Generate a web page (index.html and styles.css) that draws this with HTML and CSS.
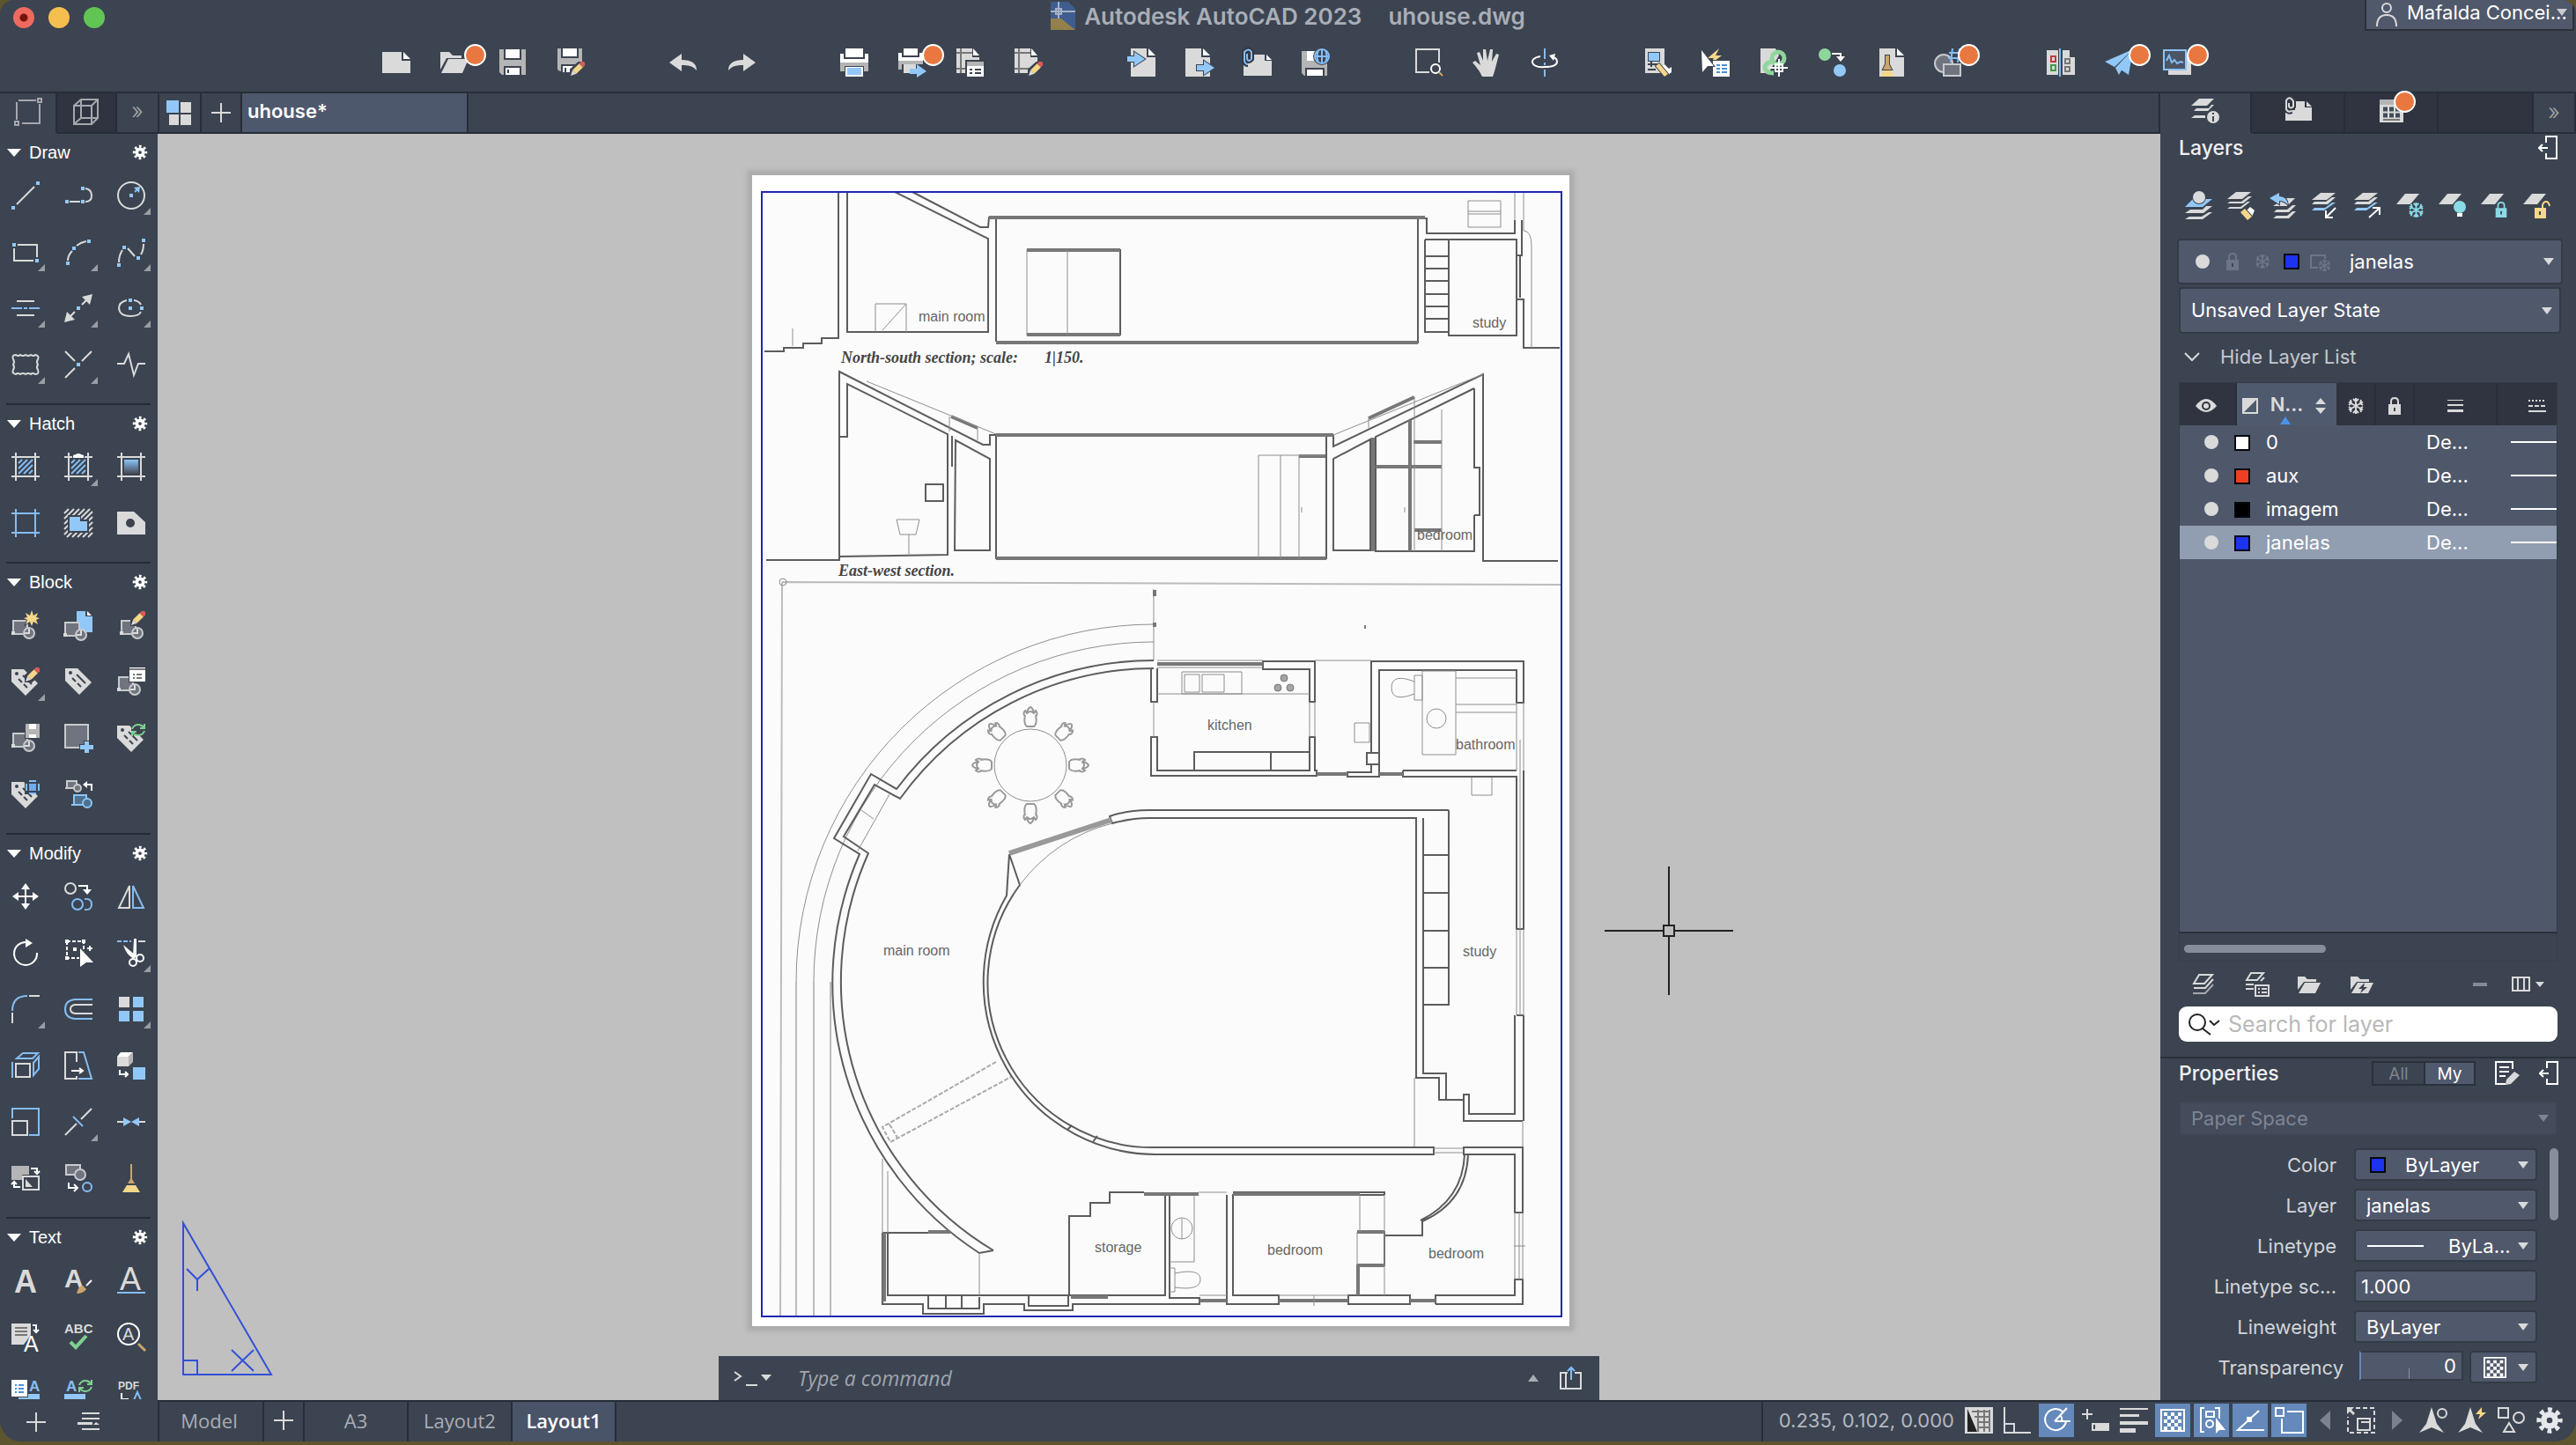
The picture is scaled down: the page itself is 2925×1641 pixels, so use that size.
FILE: index.html
```html
<!DOCTYPE html>
<html lang="en">
  <head>
    <meta charset="UTF-8" />
    <meta name="viewport" content="width=device-width, initial-scale=1.0" />
    <title>Autodesk AutoCAD 2023 - uhouse.dwg</title>
    <link rel="stylesheet" href="styles.css">
  </head>
  <body>
    <svg class="defs" aria-hidden="true">
      <symbol id="gear" viewBox="0 0 24 24">
        <circle cx="12" cy="12" r="5" fill="none" stroke="currentColor" stroke-width="5" />
        <circle cx="12" cy="12" r="9" fill="none" stroke="currentColor" stroke-width="4" stroke-dasharray="3.6 3.47" stroke-dashoffset="1.8" />
      </symbol>
      <symbol id="block" viewBox="0 0 32 32">
        <path class="g" d="M2 11H18V26H2Z" /><path class="f" d="M0 23H4V27H0Z" />
        <circle class="g" cx="20" cy="25" r="6" /><path class="l" d="M20 20V25H15" />
      </symbol>
      <symbol id="tag" viewBox="0 0 32 32">
        <path class="f" d="M0 2H14L30 18L16 32L0 16Z" /><circle class="d" cx="6" cy="7" r="2" />
        <path class="dl" d="M13 9L23 19M8 13L12 17M14 19L18 23" />
      </symbol>
      <symbol id="pencil" viewBox="0 0 16 16">
        <path fill="#3c4451" d="M0 17L0 8L9 0H17V8L8 16Z" />
        <path fill="#d9d9d9" d="M1 15L3 9L7 13Z" /><path fill="#f5d78a" d="M3 9L10 2L14 6L7 13Z" /><path fill="#dc5b56" d="M10 2L12 0H15L16 1V4L14 6Z" />
      </symbol>
      <symbol id="frame" viewBox="0 0 32 32"><path d="M5 0V32M27 0V32M0 5H32M0 27H32" /></symbol>
      <symbol id="flake" viewBox="0 0 20 20">
        <path fill="none" stroke="currentColor" stroke-width="2" d="M10 1V19M2 5.500L18 14.500M18 5.500L2 14.500M7 2L10 5L13 2M7 18L10 15L13 18M2 9L5 7L4 3M18 9L15 7L16 3M2 11L5 13L4 17M18 11L15 13L16 17" />
      </symbol>
      <symbol id="lock" viewBox="0 0 16 20">
        <path fill="none" stroke="currentColor" stroke-width="2" d="M4 9V5Q4 1 8 1T12 5V9" /><path fill="currentColor" d="M1 8H15V20H1Z" /><path class="dl" d="M8 12V16" />
      </symbol>
      <symbol id="page" viewBox="0 0 32 32"><path class="f" d="M2 0H20V10H30V32H2Z" /><path class="wf" d="M22 0L30 8H22Z" /></symbol>
      <symbol id="sheet" viewBox="0 0 26 12"><path d="M10 0H26L16 12H0Z" /></symbol>
      <symbol id="dock" viewBox="0 0 22 28"><path class="wl" d="M9 8V1H21V26H9V20M1 14H11M5 10L1 14L5 18" /></symbol>
      <symbol id="recycle" viewBox="0 0 16 14"><path fill="none" stroke="#7fd18f" stroke-width="2" d="M1 6Q3 1 8 1Q12 1 14 4M15 0V5H10M15 8Q13 13 8 13Q4 13 2 10M1 14V9H6" /></symbol>
      <symbol id="checker" viewBox="0 0 28 26">
        <path class="wl" d="M1 1H27V25H1Z" />
        <path fill="none" stroke="#fff" stroke-width="4" stroke-dasharray="4 4" d="M4 6H24M8 10H24M4 14H24M8 18H24M4 22H24" />
      </symbol>
      <symbol id="chair" viewBox="0 0 24 24"><path d="M6 10Q4 20 8 23H16Q20 20 18 10M6 12Q3 8 6 5L8 8Q12 4 16 8L18 5Q21 8 18 12M8 8Q9 2 12 1Q15 2 16 8" fill="none" stroke="#999" stroke-width="2" /></symbol>
    </svg>

    <div class="window">
      <header class="top">
        <div class="titlebar">
          <div class="lights"><span class="red"></span><span class="yellow"></span><span class="green"></span></div>
          <h1>
            <svg width="28" height="32" viewBox="0 0 28 32"><path fill="#3f5d8f" d="M0 0H20L28 8V32L12 19H0Z" /><path fill="#93804c" d="M0 19H12L28 32H0Z" /><path fill="none" stroke="#a7b2c4" stroke-width="2" d="M0 11H28M9 0V19M6 8H12V14H6Z" /></svg>
            <span>Autodesk AutoCAD 2023</span><span class="doc">uhouse.dwg</span>
          </h1>
          <button class="user" type="button">
            <svg class="l" width="26" height="28" viewBox="0 0 26 28"><circle cx="13" cy="6" r="5" /><path d="M2 27Q2 14 13 14T24 27" /></svg>
            <span>Mafalda Concei...</span>
          </button>
        </div>

        <nav class="toolbar" aria-label="Quick access">
          <div class="group">
            <button aria-label="New"><svg class="i"><path class="f" d="M0 4H22V14H32V28H0Z" /><path class="wf" d="M24 4L32 12H24Z" /></svg></button>
            <button aria-label="Open" class="badge"><svg class="i"><path class="f" d="M0 4H10L14 8H24V11H7L0 24Z" /><path class="f" d="M9 12H32L25 28H1Z" /></svg></button>
            <button aria-label="Save"><svg class="i"><path fill="#b5b5b5" d="M1 1H31V30H4L1 27Z" /><path class="wf" d="M8 1H24V11H8ZM8 22H24V30H8Z" /><path class="dl" d="M7 1V12H25V1M7 30V21H25V30M11 24V28" /></svg></button>
            <button aria-label="Save as"><svg class="i"><path fill="#b5b5b5" d="M1 0H29V26H4L1 24Z" /><path class="wf" d="M7 0H23V9H7ZM7 20H20V27H7Z" /><path class="dl" d="M6 0V10H24V0M6 28V19H22M10 22V27" /><use href="#pencil" x="15" y="15" width="17" height="17" /></svg></button>
          </div>
          <div class="group">
            <button aria-label="Undo"><svg class="i"><path class="f" d="M0 16L14 6V13Q31 13 31 25Q26 18 14 19V26Z" /></svg></button>
            <button aria-label="Redo"><svg class="i"><path class="f" d="M32 16L18 6V13Q1 13 1 25Q6 18 18 19V26Z" /></svg></button>
          </div>
          <div class="group">
            <button aria-label="Plot"><svg class="i"><path class="wf" d="M6 0H26V10H6ZM0 6H4V12H28V6H32V16H0Z" /><path fill="#b5b5b5" d="M0 16H32V26H27V20H5V26H0Z" /><path class="wf" d="M6 21H26V32H6Z" /><path class="bf" d="M8 22H24V30H8Z" /></svg></button>
            <button aria-label="Batch plot" class="badge"><svg class="i"><path class="wf" d="M6 0H22V8H6ZM0 5H4V10H24V5H28V14H0Z" /><path fill="#b5b5b5" d="M0 14H28V18H4V24H0Z" /><path class="f" d="M6 18H20V28H6Z" /><path class="bf" d="M13 23H21V18L32 26L21 33V29H13Z" /></svg></button>
            <button aria-label="Page setup"><svg class="i"><path class="f" d="M0 0H18V10H26V28H0Z" /><path class="wf" d="M19 0L26 8H19Z" /><path class="gl" d="M5 0V28M0 5H18M0 23H12" /><path fill="#3c4451" d="M10 13H32V32H10Z" /><path class="wf" d="M12 15H31V32H12Z" /><path fill="#b5b5b5" d="M12 15H31V20H12Z" /><path class="dl" d="M15 24H18M21 24H28M15 28H18M21 28H28" /></svg></button>
            <button aria-label="Plot styles"><svg class="i"><path class="f" d="M0 0H18V10H26V28H0Z" /><path class="wf" d="M19 0L26 8H19Z" /><path class="gl" d="M5 0V28M0 5H18M0 23H18" /><use href="#pencil" x="15" y="15" width="17" height="17" /></svg></button>
          </div>
          <div class="group">
            <button aria-label="Import"><svg class="i"><use href="#page" x="2" /><path class="bf o" d="M0 9H8V4L20 12L8 20V15H0Z" /></svg></button>
            <button aria-label="Export"><svg class="i"><use href="#page" x="-2" /><path class="bf o" d="M13 19H21V14L33 22L21 30V25H13Z" /></svg></button>
            <button aria-label="Attach"><svg class="i"><path class="f" d="M0 12H12V7H24V14H32V31H0Z" /><path class="wf" d="M26 7L32 13H26Z" /><path class="clip" d="M4 6V12Q6 16 9 12V4Q6 -1 1 4V14Q2 18 5 18" /><path class="bl" d="M4 6V12Q6 16 9 12V4Q6 -1 1 4V14Q2 18 5 18" /></svg></button>
            <button aria-label="Save to web"><svg class="i"><path fill="#b5b5b5" d="M0 3H29V31H3L0 28Z" /><path class="wf" d="M6 3H16V14H6ZM6 24H24V31H6Z" /><path class="dl" d="M5 31V23H25V31" /><circle class="o" fill="#3c4451" cx="23" cy="9" r="9" /><circle class="bl" cx="23" cy="9" r="8" /><path class="bl" d="M15 9H31M23 1V17M19 2Q16 9 19 16M27 2Q30 9 27 16" /></svg></button>
          </div>
          <div class="group">
            <button aria-label="Zoom window"><svg class="i"><path class="l" d="M17 27H2V1H28V16" /><circle class="wl" cx="24" cy="23" r="5" /><path stroke="#cda36c" stroke-width="2" d="M28 27L32 31" /></svg></button>
            <button aria-label="Pan"><svg class="i"><path class="f" d="M11 32Q8 25 0 16L3 14L9 19L5 5L8 4L12 14L12 1H15L17 14L20 1H23L22 15L27 6L30 7L25 26L23 32Z" /></svg></button>
            <button aria-label="Orbit"><svg class="i"><path class="bl" d="M16 0V12M16 16V19M16 24V32" /><path class="wl" d="M11 9Q1 11 2 16Q4 22 16 21Q30 21 30 15Q30 11 25 10" /><path class="wf" d="M21 8L28 6L26 14Z" /></svg></button>
          </div>
          <div class="group">
            <button aria-label="Match properties"><svg class="i"><path class="f" d="M2 0H24V28H2Z" /><path class="bf o" d="M6 5H18V14H6Z" /><path class="dl" d="M5 18H18M5 24H14M9 15V21" /><path class="wf" d="M20 22L24 18L29 23L32 21V27L28 30Z" /><path class="yf o" d="M14 20L18 17L28 29L24 32Z" /></svg></button>
            <button aria-label="Quick select"><svg class="i"><path class="yf" d="M20 0L7 11H14L10 18L23 8H16Z" /><path class="wf o" d="M13 14H32V32H13Z" /><path stroke="#4a90d9" stroke-width="2" stroke-dasharray="4 2 8" d="M17 19H29M17 23H29M17 27H29" /><path class="wf o" d="M0 2L14 20H7L1 27Z" /></svg></button>
            <button aria-label="Geographic location"><svg class="i"><path class="f" d="M1 0H18L22 8L10 28H1Z" /><circle cx="21" cy="11" r="7" fill="none" stroke="#8fd69c" stroke-width="5" /><path fill="none" stroke="#8fd69c" stroke-width="5" d="M13 15Q6 17 6 22Q7 28 16 28" /><path class="wl" d="M22 12V32M12 22H32M18 18H26V26H18Z" /></svg></button>
            <button aria-label="Convert"><svg class="i"><circle fill="#8fd69c" cx="8" cy="7" r="7" /><path class="wl" d="M16 6H26V11" /><path class="wf" d="M21 9H31L26 15Z" /><circle class="bf" cx="25" cy="25" r="7" /></svg></button>
            <button aria-label="Clean"><svg class="i"><use href="#page" x="2" /><path fill="#cda36c" class="o" d="M11 8H15V18L18 24H8L11 18Z" /><path class="yf" d="M8 25H18L20 32H6Z" /></svg></button>
            <button aria-label="Count" class="badge"><svg class="i"><circle class="g" cx="11" cy="17" r="10" /><path class="g" d="M11 18H30V31H11Z" /><path class="bl" d="M21 0L19 16M29 0L27 16M17 5H32M16 11H31" /></svg></button>
          </div>
          <div class="group">
            <button aria-label="Compare"><svg class="i"><path class="f" d="M0 2H13V30H0ZM18 2H26V10H32V30H18Z" /><path class="bl" d="M15 0V32" /><path fill="none" stroke="#c23b3b" stroke-width="2" d="M5 9H10V15H5Z" /><path fill="none" stroke="#3e9b4d" stroke-width="2" d="M5 19H10V25H5Z" /><path class="gl" d="M21 12H26V17H21ZM21 21H26V26H21Z" /></svg></button>
            <button aria-label="Share" class="badge"><svg class="i"><path class="bf" d="M0 15L32 1L11 21ZM12 22L32 1L16 30ZM18 24L32 1L27 30Z" /></svg></button>
            <button aria-label="Performance" class="badge"><svg class="i"><path class="f" d="M6 8H32V30H6Z" /><path fill="#4b5566" stroke="#8cc4f8" stroke-width="2" d="M1 2H26V24H1Z" /><path class="bl" d="M4 14L7 8L10 16L13 13L16 17L20 15L23 16" /></svg></button>
          </div>
        </nav>
      </header>

      <div class="tabs">
        <button class="tab t64 on" aria-label="2D"><svg class="i"><path class="l dim" d="M5 2H25M29 6V28H9M3 24V4" /><path class="l dim" d="M27 0H31V4H27ZM1 26H5V30H1Z" /></svg></button>
        <button class="tab t68 dark" aria-label="3D"><svg class="i"><path class="l dim" d="M2 8L10 1H29V22L22 29H2ZM2 8H22V29M22 8L29 1M10 1V22H29M10 22L2 29" /></svg></button>
        <button class="tab t48 more">»</button>
        <button class="tab t48" aria-label="Start"><svg class="i"><path class="bf" d="M1 2H15V16H1Z" /><path class="f" d="M17 4H29V16H17ZM4 18H15V30H4ZM17 18H29V30H17Z" /></svg></button>
        <button class="tab t46" aria-label="New drawing"><svg class="i"><path class="l" d="M16 5V27M5 16H27" /></svg></button>
        <button class="tab file">uhouse*</button>
        <div class="tabs-rest"></div>
        <div class="side-tabs">
          <button class="tab t104 on" aria-label="Layers"><svg class="i"><path class="f" d="M9 1H26L18 9H0ZM6 12H20L23 8H26L19 15H3ZM4 20H16V23H0Z" /><circle class="f o" cx="25" cy="22" r="7" /><path class="dl" d="M25 17V19M25 21V27" /></svg></button>
          <button class="tab t106 dark" aria-label="References"><svg class="i"><path class="f" d="M2 14H13V4H24V11H32V26H2Z" /><path class="f" d="M26 4L32 10H26Z" /><path class="clip" d="M6 6V10Q8 13 11 10V4Q7 -3 3 3V13Q5 17 9 15" /><path class="l" d="M6 6V10Q8 13 11 10V4Q7 -3 3 3V13Q5 17 9 15" /></svg></button>
          <button class="tab t106 dark badge" aria-label="Content"><svg class="i"><path class="f" d="M3 2H30V28H3Z" /><path fill="#b5b5b5" d="M3 2H30V8H3Z" /><path class="gl" d="M7 25H26" /><path stroke="#454b58" stroke-width="5" stroke-dasharray="5 2" d="M7 13H26M7 20H26" /></svg></button>
          <span class="tab rest dark"></span>
          <button class="tab t48 more">»</button>
        </div>
      </div>

      <div class="work">
        <aside class="palette">
          <div class="sections">
            <section>
              <h2>Draw <svg class="gear"><use href="#gear" /></svg></h2>
              <div class="tools">
                <button aria-label="Line"><svg class="i"><path class="l" d="M6 26L26 6" /><path class="bf" d="M0 28H4V32H0ZM28 0H32V4H28Z" /></svg></button>
                <button aria-label="Polyline"><svg class="i"><path class="l" d="M6 23H18M24 8Q31 9 31 16T24 23" /><path class="bf" d="M1 21H5V25H1ZM19 21H23V25H19ZM19 6H23V10H19Z" /></svg></button>
                <button aria-label="Circle" class="fly"><svg class="i"><circle class="l" cx="16" cy="16" r="15" /><path class="bl" d="M20 12L24 8" /><path class="bf" d="M14 14H18V18H14ZM19 7L26 6L25 13Z" /></svg></button>
                <button aria-label="Rectangle" class="fly"><svg class="i"><path class="l" d="M7 8H29V22M25 26H3V12" /><path class="bf" d="M1 6H5V10H1ZM27 24H31V28H27Z" /></svg></button>
                <button aria-label="Arc" class="fly"><svg class="i"><path class="l" d="M4 26Q4 20 9 15M14 9Q19 5 25 4" /><path class="bf" d="M26 2H30V6H26ZM9 10H13V14H9ZM2 27H6V31H2Z" /></svg></button>
                <button aria-label="Spline" class="fly"><svg class="i"><path class="l" d="M2 28Q2 20 6 14M12 12L20 21M27 19Q30 14 30 7" /><path class="bf" d="M28 1H32V5H28ZM6 9H10V13H6ZM22 21H26V25H22ZM0 29H4V33H0Z" /></svg></button>
                <button aria-label="Construction line" class="fly"><svg class="i"><path class="l" d="M6 8H26M6 24H26" /><path class="bl" d="M0 16H12M14 16H18M20 16H32" /></svg></button>
                <button aria-label="Ray" class="fly"><svg class="i"><path class="l" d="M12 20L5 27M20 12L27 5" /><path class="f" d="M32 0L29 12L20 3ZM0 32L3 20L12 29Z" /><path class="bf" d="M14 14H18V18H14Z" /></svg></button>
                <button aria-label="Ellipse" class="fly"><svg class="i"><path class="l" d="M11 7Q2 9 2 16Q3 25 15 25Q25 25 27 20M19 7Q25 8 27 12" /><path class="bf" d="M13 5H17V9H13ZM13 14H17V18H13ZM26 14H30V18H26Z" /></svg></button>
                <button aria-label="Revision cloud" class="fly"><svg class="i"><path class="l" d="M5 5Q8 7 10 5Q13 7 16 5Q19 7 22 5Q25 7 27 5Q32 6 30 10Q28 13 30 16Q28 19 30 22Q32 27 27 27Q24 25 22 27Q19 25 16 27Q13 25 10 27Q7 25 5 27Q0 26 2 22Q4 19 2 16Q4 13 2 10Q0 5 5 5Z" /></svg></button>
                <button aria-label="Point" class="fly"><svg class="i"><path class="l" d="M1 1L12 12M31 1L20 12M1 31L12 20" /><path class="bf" d="M14 14H18V18H14Z" /></svg></button>
                <button aria-label="Break line"><svg class="i"><path class="l" d="M0 15H8L13 4L19 28L24 15H32" /></svg></button>
              </div>
            </section>
            <section>
              <h2>Hatch <svg class="gear"><use href="#gear" /></svg></h2>
              <div class="tools">
                <button aria-label="Hatch"><svg class="i"><use href="#frame" class="l" /><path class="bl" d="M8 12L12 8M8 18L18 8M8 24L24 8M14 24L24 14M20 24L24 20" /></svg></button>
                <button aria-label="Hatch edit" class="fly"><svg class="i"><use href="#frame" class="l" /><path class="bl" d="M8 12L12 8M8 18L18 8M8 24L24 8M14 24L24 14M20 24L24 20" /><path class="wf o" d="M10 6V3L13 2Q16 0 19 2L22 3V6Z" /></svg></button>
                <button aria-label="Gradient"><svg class="i"><defs><linearGradient id="grad" x2="0" y2="1"><stop stop-color="#8cc4f8" /><stop offset="1" stop-color="#454b57" /></linearGradient></defs><use href="#frame" class="l" /><path fill="url(#grad)" d="M8 8H24V24H8Z" /></svg></button>
                <button aria-label="Boundary"><svg class="i"><use href="#frame" class="bl" /></svg></button>
                <button aria-label="Region"><svg class="i"><path class="l" d="M0 5L5 0M0 11L11 0M0 17L17 0M0 23L23 0M0 29L29 0M3 32L32 3M9 32L32 9M15 32L32 15M21 32L32 21M27 32L32 27" /><path class="d" d="M4 7H19V12H28V27H4Z" /><path class="bf" d="M6 9H18V14H26V25H6Z" /></svg></button>
                <button aria-label="Wipeout"><svg class="i"><path class="f" d="M0 3H19L32 15V29H0Z" /><circle class="d" cx="15" cy="16" r="5" /></svg></button>
              </div>
            </section>
            <section>
              <h2>Block <svg class="gear"><use href="#gear" /></svg></h2>
              <div class="tools">
                <button aria-label="Create block"><svg class="i"><use href="#block" /><path class="yf o" d="M23 -1L25 5L30 2L28 7L32 8L28 10L30 15L25 12L23 17L21 12L16 15L18 10L14 8L18 7L16 2L21 5Z" /></svg></button>
                <button aria-label="Insert block"><svg class="i"><path class="bf" d="M14 0H24V6H32V24H14Z" /><path class="wf" d="M26 0L31 5H26Z" /><use href="#block" y="2" x="-1" /></svg></button>
                <button aria-label="Edit block"><svg class="i"><use href="#block" x="3" y="0" /><use href="#pencil" x="15" y="0" width="17" height="17" /></svg></button>
                <button aria-label="Edit attribute" class="fly"><svg class="i"><use href="#tag" /><use href="#pencil" x="15" y="0" width="17" height="17" /></svg></button>
                <button aria-label="Define attribute"><svg class="i"><use href="#tag" x="1" y="-1" /></svg></button>
                <button aria-label="Manage attributes"><svg class="i"><use href="#block" y="0" /><path class="wf o" d="M14 0H32V16H14Z" /><path class="gl" d="M14 2H32M18 8H20M22 8H28M18 12H20M22 12H28" /></svg></button>
                <button aria-label="Write block"><svg class="i"><use href="#block" /><path fill="#b5b5b5" class="o" d="M16 0H32V16H16Z" /><path class="wf" d="M20 0H28V6H20ZM20 12H28V16H20Z" /></svg></button>
                <button aria-label="Set base point"><svg class="i"><path class="g" d="M1 1H27V27H1Z" /><path class="bf o" d="M23 20H28V24H33V29H28V33H23V29H18V24H23Z" /></svg></button>
                <button aria-label="Sync attributes"><svg class="i"><use href="#tag" /><path fill="#3c4451" d="M16 0H32V13H16Z" /><use href="#recycle" x="16" y="0" width="16" height="14" /></svg></button>
                <button aria-label="Retain attributes"><svg class="i"><use href="#tag" /><path fill="#3c4451" d="M15 0H32V16H15Z" /><path fill="#6aaeea" d="M20 4H28V12H20Z" /><path class="bl" d="M17 4V12M31 4V12M20 1H28M20 15H28" /></svg></button>
                <button aria-label="Replace block"><svg class="i"><path class="g" d="M3 1H14V9H3ZM1 9H5" /><circle class="g" cx="15" cy="9" r="4" /><path class="wl" d="M31 12V5H25" /><path class="wf" d="M26 1V9L21 5Z" /><path fill="#4f708f" stroke="#8cc4f8" stroke-width="2" d="M11 17H25V28H11ZM8 28H13" /><circle fill="#4f708f" stroke="#8cc4f8" stroke-width="2" cx="26" cy="26" r="5" /></svg></button>
              </div>
            </section>
            <section>
              <h2>Modify <svg class="gear"><use href="#gear" /></svg></h2>
              <div class="tools">
                <button aria-label="Move"><svg class="i"><path class="wl" d="M16 4V28M4 16H28" /><path class="wf" d="M16 1L21 8H11ZM16 31L21 24H11ZM1 16L8 11V21ZM31 16L24 11V21Z" /></svg></button>
                <button aria-label="Copy"><svg class="i"><circle class="l" cx="7" cy="7" r="6" /><path class="wl" d="M16 4H26V9" /><path class="wf" d="M21 8H31L26 14Z" /><circle class="bl" cx="15" cy="25" r="6" /><path class="bl" d="M23 19Q31 18 31 25T23 31" /></svg></button>
                <button aria-label="Mirror"><svg class="i"><path class="l" d="M14 4V29H2Z" /><path class="bl" d="M18 4V29H30Z" /></svg></button>
                <button aria-label="Rotate"><svg class="i"><path class="wl" d="M17 4A13 13 0 1 0 29 16" /><path class="wf" d="M16 0L24 5L16 10Z" /></svg></button>
                <button aria-label="Stretch"><svg class="i"><path class="wl" d="M3 3H22V22H3Z" stroke-dasharray="4 2" /><path class="wf" d="M1 1H5V5H1ZM20 1H24V5H20ZM1 20H5V24H1ZM10 10H14V14H10ZM26 10H32V12H26ZM28 8H30V14H28Z" /><path class="wf o" d="M18 11L33 27H25L18 32Z" /></svg></button>
                <button aria-label="Trim" class="fly"><svg class="i"><path class="bl" d="M0 3H16" stroke-dasharray="5 2" /><path class="l" d="M24 3H32" /><path class="wf" d="M19 0H22V20H18ZM7 7L22 20L19 23Q10 18 7 7Z" /><circle class="wl" cx="18" cy="27" r="4" /><circle class="wl" cx="26" cy="22" r="4" /></svg></button>
                <button aria-label="Fillet" class="fly"><svg class="i"><path class="bl" d="M1 18Q1 1 18 1" /><path class="l" d="M20 1H32M1 20V32" /></svg></button>
                <button aria-label="Offset"><svg class="i"><path class="bl" d="M32 5H12Q1 6 1 16T12 27H32" /><path class="l" d="M32 11H12Q7 12 7 16T12 21H32" /></svg></button>
                <button aria-label="Array" class="fly"><svg class="i"><path class="f" d="M2 2H14V14H2Z" /><path class="bf" d="M18 2H30V14H18ZM2 18H14V30H2ZM18 18H30V30H18Z" /></svg></button>
                <button aria-label="Explode"><svg class="i"><path class="l" d="M5 14H21V29H5Z" /><path class="bl" d="M1 12V30M6 8L13 2H30L24 8ZM25 13L31 6V20L25 27Z" /></svg></button>
                <button aria-label="Lengthen"><svg class="i"><path class="l" d="M14 12V1H1V31H14V28" /><path class="bl" d="M16 1H22L31 31H16" /><path class="wl" d="M8 22H19M17 19L21 22L17 25" /></svg></button>
                <button aria-label="Flatten"><svg class="i"><path class="f" d="M0 6H13V17H0Z" /><path fill="#fff" d="M0 6L4 1H18L13 6Z" /><path fill="#b5b5b5" d="M13 6L18 1V12L13 17Z" /><path class="bf" d="M18 18H32V32H18Z" /><path class="wl" d="M3 21V26H11M9 23L12 26L9 29" /></svg></button>
                <button aria-label="Scale"><svg class="i"><path class="l" d="M1 15H18V31H1Z" /><path class="bl" d="M1 12V1H31V31H20" /></svg></button>
                <button aria-label="Break" class="fly"><svg class="i"><path class="l" d="M1 31L14 18M19 13L31 1" /><path class="bl" d="M10 10L21 21" /></svg></button>
                <button aria-label="Join"><svg class="i"><path class="l" d="M0 16H8M24 16H32" /><path class="bf" d="M7 11L16 16L7 21ZM25 11L16 16L25 21Z" /></svg></button>
                <button aria-label="Change space"><svg class="i"><path fill="#b5b5b5" d="M0 2H20V12H12V18H0Z" /><path class="l" d="M13 14H31V29H13Z" /><path class="f" d="M16 17L24 26H16Z" /><path class="wl" d="M22 5H29V9M26 8L29 11L32 8M3 21V26H10M0 23L3 20L6 23" /></svg></button>
                <button aria-label="Copy nested"><svg class="i"><path class="g" d="M2 1H18V12H2Z" /><circle class="g" cx="18" cy="12" r="6" /><path class="wl" d="M5 21V27H13M11 23L15 27L11 31" /><circle class="bl" cx="26" cy="26" r="5" /></svg></button>
                <button aria-label="Purge"><svg class="i"><path fill="#cda36c" d="M15 0H17V17L20 22H12L15 17Z" /><path class="yf" d="M11 24H21L26 32H6Z" /></svg></button>
              </div>
            </section>
            <section>
              <h2>Text <svg class="gear"><use href="#gear" /></svg></h2>
              <div class="tools">
                <button aria-label="Multiline text"><svg class="i"><text class="ft bold" x="3" y="30" font-size="36">A</text></svg></button>
                <button aria-label="Text style"><svg class="i"><text class="ft bold" x="0" y="24" font-size="30">A</text><path class="wl" d="M25 22L31 16" /><path fill="#cda36c" d="M14 31Q16 22 21 22L25 26Q22 31 14 31Z" /></svg></button>
                <button aria-label="Single line text"><svg class="i"><text class="ft" x="3" y="27" font-size="36">A</text><path class="bl" d="M0 30H32" /></svg></button>
                <button aria-label="Convert to text"><svg class="i"><path class="f" d="M0 1H22V14L14 25H0Z" /><path class="gl" d="M4 6H18M4 10H18M4 14H18" /><path class="wl" d="M24 3H28V9M25 8L28 11L31 8" /><text class="ft white" x="14" y="33" font-size="25">A</text></svg></button>
                <button aria-label="Spell check"><svg class="i"><text class="ft bold" x="0" y="12" font-size="15">ABC</text><path fill="none" stroke="#7fd18f" stroke-width="4" d="M7 22L13 28L25 15" /></svg></button>
                <button aria-label="Find text"><svg class="i"><circle class="wl" cx="13" cy="13" r="12" /><text class="ft" x="6" y="20" font-size="20">A</text><path stroke="#cda36c" stroke-width="3" d="M24 24L32 32" /></svg></button>
                <button aria-label="Field"><svg class="i"><path class="bf" d="M8 17H32V24H8Z" /><path class="wf o" d="M0 1H18V20H0Z" /><path stroke="#4a90d9" stroke-width="2" stroke-dasharray="2 2 8" d="M4 7H14M4 11H14M4 15H14" /><text class="ft blue bold" x="20" y="14" font-size="17">A</text></svg></button>
                <button aria-label="Update field"><svg class="i"><path class="bf" d="M0 17H24V24H0Z" /><text class="ft blue bold" x="2" y="14" font-size="17">A</text><use href="#recycle" x="16" y="1" width="16" height="14" /></svg></button>
                <button aria-label="PDF text"><svg class="i"><text class="ft bold" x="1" y="12" font-size="12">PDF</text><path class="wl" d="M5 16V23H13" /><path class="bl" d="M19 24L23 15L27 24" /></svg></button>
              </div>
            </section>
          </div>
          <div class="palette-foot">
            <button aria-label="Add set"><svg class="i"><path class="l" d="M16 5V27M5 16H27" /></svg></button>
            <button aria-label="Customize"><svg class="i"><path class="l" d="M8 6H28M8 12H28M8 24H28" /><path class="f" d="M3 16H20V19H3ZM21 19L24 16L28 19Z" /></svg></button>
          </div>
        </aside>

        <div class="main">
          <div class="stage">
            <main class="canvas">
              <!-- sheet, drawn in window coordinates -->
              <svg class="paper" width="928" height="1307" viewBox="854 199 928 1307">
                <rect x="854" y="199" width="928" height="1307" fill="#fff" />
                <rect x="865" y="218" width="908" height="1277" fill="#fbfbfb" />
                <!-- north-south section -->
                <g class="ink">
                  <path d="M868 399H890V395H912V390H933V384H952V218M962 218V377H1122V271L1016 218M1036 218L1113 258H1122L1123 247H1131" />
                  <path d="M1131 248V388M1610 390V248H1620V265H1720V250M1618 272H1722V381H1645V272M1618 272V377H1645" />
                  <path d="M1618 291H1645M1618 305H1645M1618 319H1645M1618 334H1645M1618 348H1645M1618 362H1645" />
                  <path d="M1272 283V381M1728 250V290H1722M1726 290V338M1722 340H1730V395H1771" />
                </g>
                <path class="mid" d="M1123 247H1618M1131 389H1610M1166 284H1272M1166 380H1272" />
                <path class="thin" d="M1166 283V381M1212 284V380M1720 218V250M1730 218V262Q1739 262 1739 280V395M994 377V345H1029V377M1002 375L1029 345M900 373V393M1667 228H1704V258H1667ZM1667 240H1704M1667 243H1704" />
                <!-- east-west section -->
                <g class="ink">
                  <path d="M870 636H953V422L1116 505H1124V494H1131M953 496H962V436L1076 493V630L953 632M1085 500L1124 521V625H1084ZM1081 495V530" />
                  <path d="M1131 494V634H1506V494M1514 494V507L1684 425V637H1769M1514 521V625H1556V499ZM1674 441L1562 496V626H1674V585M1674 441V531H1680V585H1674" />
                  <path d="M1051 550H1071V569H1051Z" />
                </g>
                <path class="mid" d="M1131 494H1514M1131 634H1506M1559 497V626M1601 477V626M1605 502H1637M1562 530H1637M1475 518H1505M1080 473L1110 486M1554 475L1606 451M1606 602H1637" />
                <path class="thin" d="M984 433L1131 493M1078 473V490M1110 484V500M1514 494L1684 425M1554 475V486M1606 451V626M1637 465V626M1429 634V517H1505M1454 517V634M1475 517V634M1018 590H1044L1040 607H1022ZM1032 607V631M1478 576V582M1595 576V582" />
                <!-- site lines -->
                <path class="faint" d="M886 1495L888 668V661M904 1115V1495M924 1115V1495M943 1115V1495M888 661L1772 664" />
                <circle class="thin" cx="889" cy="661" r="4" />
                <path class="thin" d="M1310 669V750M1310 709A406 406 0 0 0 904 1115M1310 729A386 386 0 0 0 924 1115" />
                <path fill="#777" d="M1309 670H1313V677H1309ZM1309 707H1313V712H1309ZM1549 710H1551V714H1549Z" />
                <!-- outer curved wall -->
                <g class="ink">
                  <path d="M1310 750A365 365 0 0 0 1018 896L989 879L947 952L976 970A365 365 0 0 0 1112 1423L1128 1420" />
                  <path d="M1310 759A356 356 0 0 0 1022 907L993 891L958 950L986 969A356 356 0 0 0 1128 1420" />
                </g>
                <path class="thin" d="M1010 902L974 966M978 920L992 930" />
                <!-- courtyard -->
                <g class="ink">
                  <path d="M1645 920H1305Q1280 920 1260 927L1263 935Q1285 929 1305 929H1608V1224H1634V1249H1662V1273H1729" />
                  <path d="M1146 970L1143 1017A196 196 0 0 0 1312 1311H1628V1303H1312A187 187 0 0 1 1158 1005L1146 970" />
                  <path d="M1616 929V1219H1642V1249M1662 1249V1243H1668V1265H1720V1153M1645 920V1141H1616M1616 971H1645M1616 1014H1645M1616 1057H1645M1616 1099H1645" />
                  <path d="M1212 1283L1217 1278M1241 1297L1246 1290" />
                </g>
                <path class="band" d="M1146 969L1262 931" />
                <path class="thin" d="M1263 935A187 187 0 0 0 1158 1005M1606 1224V1302M1729 1274V1302M1628 1304H1662M1628 1309H1662" />
                <path class="dash" d="M1131 1206L1002 1280L1011 1297L1148 1223M1010 1277L1019 1292" />
                <!-- dining table -->
                <circle class="thin" cx="1170" cy="869" r="41" />
                <g>
                  <use href="#chair" x="1158" y="802" width="24" height="24" />
                  <use href="#chair" x="1158" y="802" width="24" height="24" transform="rotate(45 1170 869)" />
                  <use href="#chair" x="1158" y="802" width="24" height="24" transform="rotate(90 1170 869)" />
                  <use href="#chair" x="1158" y="802" width="24" height="24" transform="rotate(135 1170 869)" />
                  <use href="#chair" x="1158" y="802" width="24" height="24" transform="rotate(180 1170 869)" />
                  <use href="#chair" x="1158" y="802" width="24" height="24" transform="rotate(225 1170 869)" />
                  <use href="#chair" x="1158" y="802" width="24" height="24" transform="rotate(270 1170 869)" />
                  <use href="#chair" x="1158" y="802" width="24" height="24" transform="rotate(315 1170 869)" />
                </g>
                <!-- kitchen and bathroom -->
                <g class="ink">
                  <path d="M1307 759V797H1314V759M1307 837H1314V875H1487V837H1493V875H1495V881H1307ZM1434 751H1493V797H1487V760H1434Z" />
                  <path d="M1356 875V854H1487M1443 854V875" />
                  <path d="M1557 855V751H1730V798H1722V761H1566V855ZM1552 855H1566V868H1552ZM1557 868V877H1530V882H1566V868" />
                  <path d="M1593 875H1722M1593 875V882H1722V1055H1730V875M1730 1153V1273M1722 1153H1730" />
                </g>
                <path class="mid" d="M1314 754H1434M1566 879H1593M1495 879H1530" />
                <path class="thin" d="M1310 797V837M1487 797V837M1493 797V837M1314 788H1487M1342 763H1410V788H1342ZM1345 766H1362V786H1345ZM1365 766H1390V786H1365ZM1493 750H1557M1314 750H1434M1314 758H1434M1722 798V875M1730 798V875M1726 840V1153M1722 1055V1153M1730 1055V1153M1615 762H1653V857H1615ZM1653 770H1722M1653 800H1722M1653 809H1722M1606 767H1615V795H1606ZM1606 788Q1580 798 1580 781T1606 774M1538 821H1555V843H1538ZM1671 883V903H1694V883" />
                <circle class="thin" cx="1631" cy="816" r="11" />
                <g fill="#a5a5a5" stroke="#777"><circle cx="1458" cy="770" r="4" /><circle cx="1451" cy="781" r="4" /><circle cx="1465" cy="781" r="4" /></g>
                <!-- bottom rooms -->
                <g class="ink">
                  <path d="M1002 1400V1481H1048V1492H1117V1481H1163V1488H1218V1481H1362V1474H1328V1357M1002 1400H1054M1008 1400V1471H1214V1381H1238V1366H1260V1354H1299" />
                  <path d="M1214 1471H1323V1357M1168 1471V1483H1213V1471M1054 1471V1486H1112V1473M1074 1471V1486M1092 1471V1486" />
                  <path d="M1393 1357V1481H1452V1471H1400V1357H1572M1400 1354H1572V1357M1544 1399H1572V1437H1541V1471M1531 1471H1601V1481H1531ZM1630 1481V1471H1720V1453H1729V1481H1630" />
                  <path d="M1662 1303H1729V1377H1720V1311H1662ZM1667 1311Q1665 1365 1615 1387V1403H1573M1663 1311Q1661 1362 1613 1386" />
                </g>
                <path class="mid" d="M1299 1356H1361M1400 1356H1544M1216 1473H1258M1362 1477H1393M1452 1477H1531M1601 1477H1630M1541 1437H1572M1541 1399H1572M1054 1399H1079M1542 1437V1471M1004 1400V1478" />
                <path class="thin" d="M1002 1316V1400M1008 1330V1400M1112 1423V1471M1361 1354H1393M1356 1357V1433H1328M1544 1357V1399M1541 1399V1437M1572 1357V1471M1720 1377V1453M1729 1377V1453M1725 1377V1453M1719 1415H1732M1328 1440H1334V1467H1328M1334 1446Q1363 1440 1363 1453T1334 1462M1492 1471V1483M1362 1471H1393M1452 1471H1531M1342 1384V1407" />
                <circle class="thin" cx="1342" cy="1395" r="12" />
                <g class="room">
                  <text x="1043" y="365">main room</text>
                  <text x="1672" y="372">study</text>
                  <text x="1609" y="613">bedroom</text>
                  <text x="1371" y="829">kitchen</text>
                  <text x="1653" y="851">bathroom</text>
                  <text x="1003" y="1085">main room</text>
                  <text x="1661" y="1086">study</text>
                  <text x="1243" y="1422">storage</text>
                  <text x="1439" y="1425">bedroom</text>
                  <text x="1622" y="1429">bedroom</text>
                </g>
                <g class="caption">
                  <text x="955" y="412">North-south section; scale:</text>
                  <text x="1186" y="412">1|150.</text>
                  <text x="952" y="654">East-west section.</text>
                </g>
                <rect x="865" y="218" width="908" height="1277" fill="none" stroke="#2226b4" stroke-width="2" />
              </svg>

              <svg class="ucs" width="104" height="176" viewBox="206 1387 104 176">
                <path d="M208 1389V1561H308ZM208 1545H224V1561M212 1441L224 1453L237 1441M224 1453V1466M263 1533L288 1557M288 1533L263 1557" />
              </svg>
              <svg class="cursor" width="146" height="146" viewBox="0 0 146 146">
                <path d="M73 0V67M73 79V146M0 73H67M79 73H146M67 67H79V79H67Z" />
              </svg>

              <form class="command">
                <svg class="prompt" width="46" height="24" viewBox="0 0 46 24"><path class="l" d="M2 5L9 10L2 15M15 20H28" /><path class="f" d="M32 8H44L38 15Z" /></svg>
                <input type="text" aria-label="Command" placeholder="Type a command" />
                <svg width="14" height="10" viewBox="0 0 14 10"><path fill="#a9adb5" d="M1 9H13L7 1Z" /></svg>
                <button type="button" aria-label="History"><svg width="28" height="28" viewBox="0 0 28 28"><path class="l" d="M10 8H2V26H25V8H18M8 8V26" /><path class="bl" d="M14 16V3M10 6L14 2L18 6" /></svg></button>
              </form>
            </main>

            <aside class="panel">
              <section class="layers">
                <h3>Layers <svg class="dock" width="22" height="28"><use href="#dock" /></svg></h3>
                <div class="layer-tools">
                  <button aria-label="Make current"><svg class="i"><path class="f" d="M6 21H20L24 17H31L21 25H0ZM5 29L0 32H20L31 24H27L19 29Z" /><path class="bf" d="M9 9H31L20 18H0Z" /><circle class="f o" cx="16" cy="7" r="7" /></svg></button>
                  <button aria-label="Match layer"><svg class="i"><path class="f" d="M10 1H27L17 9H0ZM0 14H18L28 6H24L16 12H3ZM0 20H16L26 12H23L15 18H3Z" /><path class="wf" d="M20 24L26 18L31 22L28 29Z" /><path class="yf o" d="M15 24L20 20L28 29L23 33Z" /></svg></button>
                  <button aria-label="Previous"><svg class="i"><path class="f" d="M18 8H29L20 17H4ZM5 24H22L30 16H26L20 21H8ZM4 31H22L30 23H26L20 28H8Z" /><path class="bf o" d="M0 8L11 2V6Q20 6 21 16Q17 11 11 11V15Z" /></svg></button>
                  <button aria-label="Isolate"><svg class="i"><path class="f" d="M10 2H27L17 10H0ZM0 15H18L27 7H23L16 12H3Z" /><path class="bf" d="M0 22H14L27 13H23L15 19H3Z" /><path class="wl" d="M27 19L17 29M16 22V30H24" /></svg></button>
                  <button aria-label="Unisolate"><svg class="i"><path class="f" d="M10 2H27L17 10H0ZM0 15H18L27 7H23L16 12H3Z" /><path class="bf" d="M0 22H14L27 13H23L15 19H3Z" /><path class="wl" d="M17 30L28 20M21 19H29V27" /></svg></button>
                  <button aria-label="Freeze"><svg class="i cyan"><use href="#sheet" x="0" y="3" width="26" height="12" class="f" /><circle fill="#3c4451" cx="22" cy="21" r="9" /><use href="#flake" x="13" y="12" width="19" height="19" /></svg></button>
                  <button aria-label="Off"><svg class="i cyan"><use href="#sheet" x="0" y="3" width="26" height="12" class="f" /><circle class="o" fill="#8adbe6" cx="24" cy="18" r="7" /><path class="wf" d="M21 25H27V29H21Z" /></svg></button>
                  <button aria-label="Lock"><svg class="i cyan"><use href="#sheet" x="0" y="3" width="26" height="12" class="f" /><use href="#lock" x="15" y="12" width="16" height="18" /></svg></button>
                  <button aria-label="Unlock"><svg class="i"><use href="#sheet" x="0" y="3" width="26" height="12" class="f" /><path fill="none" stroke="#f5d78a" stroke-width="2" d="M22 20V16Q23 12 26 12T30 17" /><path class="yf" d="M13 19H26V31H13Z" /><path class="dl" d="M19 23V27" /></svg></button>
                </div>
                <div class="combo layer-combo">
                  <svg width="170" height="26" viewBox="0 0 170 26"><circle class="f" cx="17" cy="13" r="8" /><g color="#6c7487"><use href="#lock" x="43" y="3" width="16" height="20" /><use href="#flake" x="76" y="4" width="18" height="18" /><path fill="none" stroke="currentColor" stroke-width="2" d="M148 20H140V6H156V10" /><use href="#flake" x="148" y="10" width="15" height="15" /></g><path fill="#1c33f0" stroke="#05070c" stroke-width="2" d="M110 5H126V21H110Z" /></svg>
                  <select aria-label="Current layer"><option>janelas</option></select>
                </div>
                <div class="combo state-combo"><select aria-label="Layer state"><option>Unsaved Layer State</option></select></div>
                <button class="hide-list" type="button"><svg width="18" height="12" viewBox="0 0 18 12"><path class="l" d="M1 2L9 10L17 2" /></svg>Hide Layer List</button>

                <div class="list">
                  <table>
                    <colgroup><col class="c64"><col class="c114"><col class="c44"><col class="c44"><col class="c94"><col></colgroup>
                    <thead>
                      <tr>
                        <th aria-label="Visible"><svg width="24" height="16" viewBox="0 0 24 16"><path class="f" d="M0 8Q12 -8 24 8Q12 22 0 8Z" /><circle class="d" cx="12" cy="8" r="5" /><circle class="f" cx="12" cy="8" r="3" /></svg></th>
                        <th class="sorted"><svg width="18" height="18" viewBox="0 0 18 18"><path class="l" d="M1 1H17V17H1Z" /><path class="f" d="M1 17V1H17Z" /></svg><span>N...</span><svg width="12" height="18" viewBox="0 0 12 18"><path class="f" d="M0 7L6 0L12 7ZM0 11H12L6 18Z" /></svg></th>
                        <th aria-label="Freeze"><svg width="20" height="20"><use href="#flake" /></svg></th>
                        <th aria-label="Lock"><svg width="16" height="20"><use href="#lock" /></svg></th>
                        <th aria-label="Lineweight"><svg width="18" height="16" viewBox="0 0 18 16"><path class="f" d="M0 1H18V2H0ZM0 6H18V8H0ZM0 12H18V15H0Z" /></svg></th>
                        <th aria-label="Linetype" class="right"><svg width="20" height="16" viewBox="0 0 20 16"><path class="l" stroke-dasharray="2 2" d="M0 2H20" /><path class="l" stroke-dasharray="5 2" d="M0 8H20" /><path class="l" d="M0 14H20" /></svg></th>
                      </tr>
                    </thead>
                    <tbody>
                      <tr><td><i class="dot"></i></td><td colspan="3"><i class="swatch white"></i>0</td><td class="de">De...</td><td><hr></td></tr>
                      <tr><td><i class="dot"></i></td><td colspan="3"><i class="swatch redc"></i>aux</td><td class="de">De...</td><td><hr></td></tr>
                      <tr><td><i class="dot"></i></td><td colspan="3"><i class="swatch black"></i>imagem</td><td class="de">De...</td><td><hr></td></tr>
                      <tr class="selected"><td><i class="dot"></i></td><td colspan="3"><i class="swatch blue"></i>janelas</td><td class="de">De...</td><td><hr></td></tr>
                    </tbody>
                  </table>
                </div>
                <div class="hscroll"><span></span></div>
                <div class="list-tools">
                  <button aria-label="New layer"><svg class="i"><path class="l" d="M11 5H26L17 15H5ZM5 20H18L27 10" /><path class="l dim" d="M4 26H18L27 16" /></svg></button>
                  <button aria-label="Layer settings"><svg class="i"><path class="l" d="M10 3H24L17 11H5ZM4 16H13M4 21H13M21 12L25 8" /><path class="l" d="M15 17H30V29H15ZM18 21H20M22 21H28M18 25H20M22 25H28" /></svg></button>
                  <button aria-label="New group"><svg class="i"><path class="f" d="M3 7H11L14 10H24V13H10L3 22Z" /><path class="f" d="M11 14H29L23 26H4Z" /></svg></button>
                  <button aria-label="Smart group"><svg class="i"><path class="f" d="M3 7H11L14 10H24V13H10L3 22Z" /><path class="f" d="M11 14H29L23 26H4Z" /><path class="d" d="M19 14L12 21H16L14 26L22 19H18Z" /></svg></button>
                  <svg class="minus" width="16" height="4"><path fill="#848a96" d="M0 0H16V4H0Z" /></svg>
                  <button aria-label="Columns"><svg width="38" height="18" viewBox="0 0 38 18"><path class="l" d="M1 1H20V16H1ZM7 1V16M14 1V16" /><path class="f" d="M27 6H37L32 12Z" /></svg></button>
                </div>
                <label class="search">
                  <svg width="38" height="28" viewBox="0 0 38 28"><circle cx="11" cy="12" r="9" /><path d="M17 19L26 26M25 10L30 15L36 10" /></svg>
                  <input type="search" placeholder="Search for layer" />
                </label>
              </section>

              <section class="properties">
                <div class="prop-head">
                  <h3>Properties</h3>
                  <div class="seg"><button>All</button><button class="on">My</button></div>
                  <svg width="30" height="28" viewBox="0 0 30 28"><path class="wl" d="M20 9V1H1V26H12M5 7H16M5 12H16M5 17H12" /><path class="f" d="M12 27L13 21L22 12L28 16L18 26Z" /></svg>
                  <svg width="22" height="28"><use href="#dock" /></svg>
                </div>
                <div class="combo space"><select disabled aria-label="Space"><option>Paper Space</option></select></div>
                <div class="props">
                  <div class="rows">
                    <label for="color">Color</label>
                    <div class="combo"><i class="swatch blue"></i><select id="color"><option>ByLayer</option></select></div>
                    <label for="layer">Layer</label>
                    <div class="combo"><select id="layer"><option>janelas</option></select></div>
                    <label for="ltype">Linetype</label>
                    <div class="combo"><hr><select id="ltype"><option>ByLa...</option></select></div>
                    <label for="lscale">Linetype sc...</label>
                    <input id="lscale" class="field" type="text" value="1.000" />
                    <label for="lweight">Lineweight</label>
                    <div class="combo"><select id="lweight"><option>ByLayer</option></select></div>
                    <label for="transp" class="wide">Transparency</label>
                    <div class="transp">
                      <input id="transp" type="text" value="0" />
                      <button class="combo" type="button" aria-label="Transparency mode"><svg width="26" height="26"><use href="#checker" /></svg></button>
                    </div>
                  </div>
                  <span class="vscroll"></span>
                </div>
              </section>
            </aside>
          </div>

          <footer class="status">
            <nav class="sheets">
              <button class="model">Model</button>
              <button class="plus" aria-label="New layout"><svg width="22" height="22" viewBox="0 0 22 22"><path class="l" d="M11 0V22M0 11H22" /></svg></button>
              <button>A3</button>
              <button>Layout2</button>
              <button class="on">Layout1</button>
            </nav>
            <span class="coords">0.235, 0.102, 0.000</span>
            <div class="toggles">
              <button aria-label="Grid"><svg class="i"><path fill="#d9d9d9" d="M0 1H32V31H0Z" /><path fill="#222" d="M3 3V29H14Z" /><path class="gl" d="M8 6H28M11 12H28M14 18H28M16 24H28M15 4V29M22 4V29M28 4V29" /></svg></button>
              <button aria-label="Ortho"><svg class="i"><path class="l" d="M1 1V30H31M1 20H12V30" /></svg></button>
              <button class="on" aria-label="Polar"><svg class="i"><path class="wl" d="M23 6A12 12 0 1 0 27 17M14 17H32M14 17L28 2M20 10Q23 13 22 17" /></svg></button>
              <button aria-label="Dynamic input"><svg class="i"><path class="l" d="M7 3V15M1 9H13" /><path class="f" d="M12 19H32V28H12Z" /><path class="dl" d="M15 21V26" /></svg></button>
              <button aria-label="Lineweight"><svg class="i"><path class="f" d="M0 2H32V4H0ZM0 9H22V12H0ZM0 17H32V21H0ZM0 25H18V30H0Z" /></svg></button>
              <button class="on" aria-label="Transparency"><svg class="i"><use href="#checker" x="2" y="3" width="28" height="26" /></svg></button>
              <button class="on" aria-label="Selection cycling"><svg class="i"><path class="wl" d="M8 2H4V29H8M20 2H25V14M10 6H19V12H10Z" /><circle class="wl" cx="14" cy="20" r="4" /><path class="wf" d="M21 13L32 27H25L21 31Z" /></svg></button>
              <button class="on" aria-label="Object snap"><svg class="i"><path class="wl" d="M26 5L2 27H32" /><path class="wf" d="M12 12H18V18H12Z" /></svg></button>
              <button class="on" aria-label="Snap box"><svg class="i"><path class="wl" d="M14 6H32V30H8V14M1 2H10V11H1Z" /></svg></button>
              <span class="tri left"></span>
              <button aria-label="Viewport"><svg class="i"><path class="l" stroke-dasharray="5 3" d="M10 2H31V30H1V12" /><path class="l" d="M12 14H26V27H12ZM16 18H26" /><path class="f" d="M0 1H8L5 4L9 8L7 10L3 6L0 9Z" /></svg></button>
              <span class="tri"></span>
              <button aria-label="Annotation visibility"><svg class="i"><path class="f" d="M14 1L20 20L28 30L14 24L0 30L8 20Z" /><circle class="l" cx="26" cy="8" r="5" /></svg></button>
              <button aria-label="Auto scale"><svg class="i"><path class="f" d="M14 1L20 20L28 30L14 24L0 30L8 20Z" /><path class="yf o" d="M27 1L20 9H25L23 15L32 7H27Z" /></svg></button>
              <button aria-label="Workspace"><svg class="i"><path class="l" d="M2 2H13V13H2ZM14 19L20 29H8Z" /><circle class="l" cx="25" cy="13" r="6" /></svg></button>
              <button aria-label="Settings"><svg class="i"><use href="#gear" /></svg></button>
            </div>
          </footer>
        </div>
      </div>
    </div>
  </body>
</html>
```
FILE: styles.css
```css
* { box-sizing: border-box }
body {
  margin: 0;
  height: 100vh;
  padding-bottom: 4px;
  background: #5d5530;
  font-family: Inter, "Liberation Sans", sans-serif;
  font-size: 22px;
  color: #e6e8ec;
  overflow: hidden;
}
button, input, select { font: inherit; color: inherit; margin: 0 }
button {
  padding: 0;
  border: none;
  background: none;
  display: flex;
  align-items: center;
  justify-content: center;
  position: relative;
}
h1, h2, h3, hr { margin: 0; font-weight: 500 }
svg { flex: none; display: block; overflow: visible }
.defs { position: absolute; width: 0; height: 0 }
.window {
  display: flex;
  flex-direction: column;
  height: 100%;
  background: #3c4451;
  border-radius: 16px 16px 24px 24px;
  overflow: hidden;
}

/* icon parts */
.i { width: 32px; height: 32px }
.f { fill: #dadada }
.wf { fill: #fff }
.bf { fill: #92c8f8 }
.yf { fill: #f5d78a }
.d { fill: #3c4451 }
.l, .bl, .wl, .gl, .dl { fill: none; stroke: #dadada; stroke-width: 2 }
.bl { stroke: #85bdf3 }
.wl { stroke: #fff }
.gl { stroke: #777 }
.dl { stroke: #3c4451 }
.clip { fill: none; stroke: #323844; stroke-width: 6 }
.dim { stroke: #a5a8ad }
.g { fill: #70747f; stroke: #c9cacd; stroke-width: 2 }
.o { stroke: #3c4451; stroke-width: 2; paint-order: stroke }
.ft { font-family: "Liberation Sans", sans-serif; fill: #dadada }
.ft.bold { font-weight: bold }
.ft.blue { fill: #85bdf3 }
.ft.white { fill: #fff }
.cyan { color: #8adbe6 }

/* title */
.titlebar {
  display: flex;
  align-items: center;
  justify-content: center;
  height: 36px;
  position: relative;
}
.lights { position: absolute; left: 15px; top: 8px; display: flex; gap: 16px }
.lights span { width: 24px; height: 24px; border-radius: 50% }
.red { background: radial-gradient(#7a120c 4px, #ed6a5e 5px) }
.yellow { background: #f5bf4f }
.green { background: #61c554 }
h1 {
  display: flex;
  align-items: center;
  gap: 10px;
  font-size: 26px;
  font-weight: 600;
  color: #a9aeb7;
}
.doc { margin-left: 20px }
.user {
  position: absolute;
  right: 2px;
  top: 0;
  width: 238px;
  height: 35px;
  padding-left: 10px;
  justify-content: flex-start;
  gap: 10px;
  background: #50586b;
  border: 2px solid #2a313b;
  border-top: none;
  color: #fff;
  white-space: nowrap;
}
.user span { padding-bottom: 6px }
.user::after {
  content: "";
  position: absolute;
  right: 6px;
  top: 10px;
  border: 6px solid transparent;
  border-top: 8px solid #c8cbd0;
  border-bottom: none;
}
.toolbar {
  display: flex;
  justify-content: center;
  gap: 62px;
  height: 68px;
  padding: 2px 4px 0 0;
}
.group { display: flex }
.toolbar button { width: 66px; height: 66px }
.badge::after {
  content: "";
  position: absolute;
  left: 44px;
  top: 12px;
  width: 21px;
  height: 21px;
  border-radius: 50%;
  border: 2px solid #fff;
  background: #e87840;
}

/* document tabs */
.tabs { display: flex; height: 48px; border-top: 2px solid #272e38 }
.tab {
  height: 46px;
  border-right: 2px solid #272e38;
  border-bottom: 2px solid #272e38;
}
.tab.on { border-bottom-color: #3c4451 }
.tab.dark { background: #2f3440 }
.t46 { width: 46px }
.t48 { width: 48px }
.t64 { width: 65px }
.t68 { width: 68px }
.t104 { width: 104px }
.t106 { width: 106px }
.more { color: #a5a8ad; font-size: 25px; font-weight: 300; padding-bottom: 4px }
.file {
  width: 257px;
  justify-content: flex-start;
  padding: 0 0 4px 6px;
  background: #4e586d;
  font-weight: 600;
  color: #fff;
}
.tabs-rest { flex: 1; border-bottom: 2px solid #272e38; border-right: 2px solid #272e38 }
.side-tabs { display: flex; width: 472px }
.side-tabs .tab { padding-bottom: 2px }
.side-tabs .badge::after { left: 55px; top: -3px }
.rest { flex: 1 }

/* left tool palette */
.work { flex: 1; display: flex; min-height: 0 }
.palette { width: 179px; display: flex; flex-direction: column }
.sections { flex: 1; min-height: 0; overflow: hidden }
.sections section + section { border-top: 2px solid #252c37; margin: 0 8px 0 7px }
.sections section + section > * { margin-left: -7px; margin-right: -8px }
.sections section { padding-bottom: 12px }
h2 {
  display: flex;
  align-items: center;
  gap: 9px;
  height: 38px;
  padding: 4px 11px 0 8px;
  font: 20px "Liberation Sans", sans-serif;
  color: #fff;
}
h2::before {
  content: "";
  border: 8px solid transparent;
  border-top: 9px solid #fff;
  border-bottom: none;
}
.gear { width: 18px; height: 18px; margin-left: auto }
.tools { display: grid; grid-template-columns: repeat(3, 60px); width: 180px }
.tools button { height: 64px; padding-right: 2px }
.fly::after {
  content: "";
  position: absolute;
  right: 9px;
  bottom: 10px;
  border-left: 8px solid transparent;
  border-bottom: 8px solid #9a9da2;
}
.palette-foot { display: flex; height: 48px; gap: 28px; padding: 4px 0 0 25px; align-items: center }

/* drawing area */
.main { flex: 1; display: flex; flex-direction: column; min-width: 0 }
.stage { flex: 1; display: flex; min-height: 0 }
.canvas {
  flex: 1;
  position: relative;
  display: flex;
  justify-content: center;
  align-items: flex-start;
  padding: 47px 0 0 4px;
  background: #c0c0c0;
  overflow: hidden;
}
.paper { box-shadow: 0 0 5px 6px #adadad; overflow: hidden }
.ink, .mid, .thin, .faint, .dash, .band { fill: none; stroke: #5c5c5c; stroke-width: 2 }
.mid { stroke: #777; stroke-width: 4 }
.thin { stroke: #8e8e8e; stroke-width: 1 }
.faint { stroke: #bcbcbc }
.dash { stroke: #aaa; stroke-dasharray: 5 2 }
.band { stroke: #999; stroke-width: 6 }
.room { font: 16px "Liberation Sans", sans-serif; fill: #666 }
.caption { font: italic bold 18px "Liberation Serif", serif; fill: #444 }
.ucs { position: absolute; left: 27px; bottom: 27px }
.ucs path { fill: none; stroke: #3350d6; stroke-width: 2 }
.cursor { position: absolute; left: 1643px; top: 832px }
.cursor path { fill: none; stroke: #222; stroke-width: 2 }
.command {
  position: absolute;
  bottom: 0;
  left: 637px;
  width: 1000px;
  height: 50px;
  display: flex;
  align-items: center;
  padding: 0 18px 0 16px;
  background: #3c4451;
}
.command input {
  flex: 1;
  margin-left: 28px;
  padding: 0;
  border: none;
  outline: none;
  background: none;
  font: italic 23px "Open Sans", "Noto Sans", sans-serif;
}
.command input::placeholder { color: #a0a5ae; opacity: 1 }
.command button { margin-left: 22px }

/* layers panel */
.panel { width: 472px; display: flex; flex-direction: column }
.layers { flex: 1; display: flex; flex-direction: column; min-height: 0; padding: 0 21px }
h3 { font-size: 23px; color: #f0f1f3 }
.layers h3 {
  display: flex;
  justify-content: space-between;
  align-items: center;
  height: 32px;
}
.layer-tools { display: flex; gap: 16px; margin-top: 33px; padding-left: 7px; height: 32px }
.combo {
  position: relative;
  display: flex;
  align-items: center;
  background: #50586b;
  border: 2px solid #333b46;
  border-radius: 4px;
  color: #fff;
}
.combo::after {
  content: "";
  position: absolute;
  right: 8px;
  top: 50%;
  margin-top: -4px;
  border: 6px solid transparent;
  border-top: 8px solid #dadada;
  border-bottom: none;
  pointer-events: none;
}
.combo select {
  appearance: none;
  flex: 1;
  min-width: 0;
  height: 100%;
  padding: 0 0 0 12px;
  border: none;
  outline: none;
  background: none;
}
.layer-combo { height: 52px; margin: 22px -6px 0 -2px; padding-left: 10px }
.layer-combo select { padding-left: 14px }
.state-combo { height: 53px; margin: 3px -4px 0 0 }
.state-combo select { padding-bottom: 2px }
.hide-list {
  height: 55px;
  justify-content: flex-start;
  gap: 23px;
  padding: 0 0 3px 6px;
  color: #c5c8ce;
}
.list { flex: 1; min-height: 0; background: #4f586a; border: 1px solid #333b46; border-bottom: 2px solid #2a313b }
.list, .hscroll, .list-tools, .search { width: 430px }
table { width: 100%; border-collapse: collapse; table-layout: fixed }
.c64 { width: 64px }
.c114 { width: 114px }
.c44 { width: 44px }
.c94 { width: 94px }
th {
  height: 48px;
  padding: 0;
  background: #2f3440;
  border-right: 2px solid #292e39;
  font-weight: 600;
  color: #dadada;
}
th:first-child { padding-right: 4px }
th svg { display: inline-block; vertical-align: middle }
th span { margin: 0 14px }
th .d { fill: #2f3440 }
.sorted { background: #4f5a6e; position: relative; border: none; white-space: nowrap; padding-right: 6px }
.sorted::after {
  content: "";
  position: absolute;
  left: 49px;
  bottom: 1px;
  border: 6px solid transparent;
  border-bottom: 9px solid #4c92ea;
  border-top: none;
}
th.right { text-align: right; padding-right: 12px; border: none }
td { height: 38px; padding: 0; color: #fff; white-space: nowrap }
.selected { background: #919db0 }
.dot {
  display: block;
  width: 16px;
  height: 16px;
  margin-left: 28px;
  border-radius: 50%;
  background: #dadada;
}
.swatch {
  display: inline-block;
  flex: none;
  width: 18px;
  height: 18px;
  margin: 0 18px 0 -2px;
  vertical-align: -2px;
  border: 2px solid #05070c;
}
.white { background: #fff }
.redc { background: #ee3f22 }
.black { background: #000 }
.blue { background: #1c33f0 }
.de { padding-left: 14px }
hr { border: none; border-top: 2px solid #fff }
td hr { margin-left: 16px }
.hscroll { height: 32px; padding: 13px 5px; border: 1px solid #363e4a; border-top: none }
.hscroll span { display: block; width: 161px; height: 9px; border-radius: 5px; background: #878e9b }
.list-tools { display: flex; align-items: center; height: 51px; padding: 0 14px 0 12px; gap: 28px }
.minus { margin-left: auto }
.search {
  display: flex;
  align-items: center;
  height: 40px;
  gap: 8px;
  padding-left: 10px;
  margin-bottom: 17px;
  border-radius: 9px;
  background: #fff;
}
.search svg { fill: none; stroke: #222; stroke-width: 2 }
.search input {
  flex: 1;
  min-width: 0;
  border: none;
  outline: none;
  background: none;
  padding: 0;
  font-size: 25px;
  color: #222;
}
.search input::placeholder { color: #b9b9b9; opacity: 1 }

/* properties panel */
.properties { height: 390px; border-top: 2px solid #2a313b; padding: 0 20px 0 21px }
.prop-head { display: flex; align-items: center; height: 34px }
.seg { display: flex; margin: 0 22px 0 auto; border: 2px solid #2a313b; font-size: 19px }
.seg button { width: 57px; height: 24px; color: #7d838f }
.seg .on { background: #4f5a6e; color: #fff; border-left: 2px solid #2a313b }
.prop-head svg + svg { margin-left: 20px }
.space { height: 40px; width: 430px; margin-top: 14px; background: #444c5c; border-color: #3d4553 }
.space select { color: #7e8592; opacity: 1 }
.space::after { border-top-color: #7e8592 }
.props { display: flex; gap: 14px; margin-top: 14px }
.rows {
  display: grid;
  grid-template-columns: 178px 208px;
  column-gap: 20px;
  row-gap: 9px;
  align-items: center;
  width: 407px;
  padding-left: 1px;
  text-align: right;
  color: #d2d5da;
}
.rows .combo, .field { height: 37px; text-align: left }
.rows .wide { margin-right: -8px }
.rows .combo > .swatch { margin: 0 10px 0 16px }
.rows .combo > hr { width: 64px; margin: 0 16px 0 13px }
.field, .transp input {
  width: 100%;
  padding: 0 6px;
  border: 2px solid #333b46;
  border-radius: 4px;
  background: #50586b;
  color: #fff;
}
.transp { display: flex; justify-content: space-between; padding-left: 6px }
.transp input {
  width: 118px;
  height: 34px;
  border-radius: 0;
  border-left-color: #6489ba;
  text-align: right;
  background: linear-gradient(#8a91a0, #8a91a0) 54px 18px / 1px 12px no-repeat #50586b;
}
.transp .combo { width: 77px; padding-right: 20px }
.vscroll { width: 10px; height: 82px; border-radius: 5px; background: #878e9b }

/* status bar */
.status {
  display: flex;
  align-items: center;
  height: 47px;
  padding-right: 10px;
  border-top: 2px solid #252c37;
}
.sheets { display: flex; height: 45px; margin-right: auto }
.sheets button {
  width: 118px;
  padding-bottom: 4px;
  border-right: 2px solid #272e38;
  font-family: "Open Sans", "Noto Sans", sans-serif;
  color: #a9aeb7;
}
.sheets .model { width: 121px; padding-right: 4px; border-left: 2px solid #272e38 }
.sheets .plus { width: 46px }
.sheets .on { background: #4a5468; color: #fff; font-weight: 600 }
.coords {
  display: flex;
  align-items: center;
  height: 45px;
  padding: 0 8px 3px 18px;
  border-left: 2px solid #272e38;
  color: #b4b8c0;
}
.toggles { display: flex; gap: 4px; align-items: center; padding-bottom: 3px }
.toggles button { width: 40px; height: 38px }
.toggles .on { background: #6489ba }
.tri {
  width: 34px;
  height: 22px;
  background: #7c828e;
  clip-path: polygon(11px 0, 23px 11px, 11px 22px);
}
.tri.left { clip-path: polygon(23px 0, 11px 11px, 23px 22px) }
```
